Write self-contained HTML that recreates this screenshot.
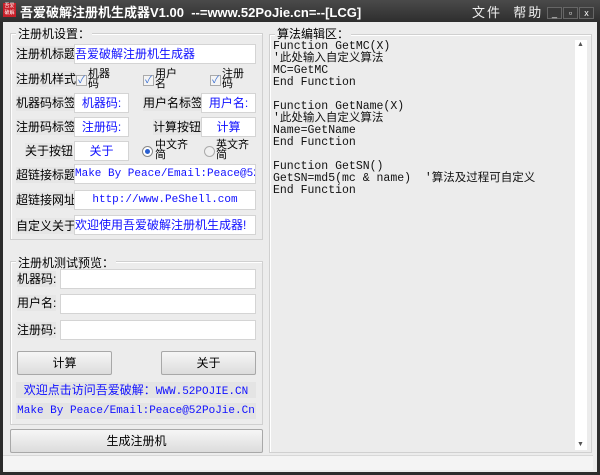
<!DOCTYPE html>
<html><head><meta charset="utf-8"><style>
*{margin:0;padding:0;box-sizing:border-box}
body{width:600px;height:475px;background:#2b2b2b;position:relative;overflow:hidden;font-family:"Liberation Sans","Noto Sans CJK SC",sans-serif;font-size:12px;color:#000}
.a{position:absolute}
#title{left:0;top:0;width:600px;height:22px;background:linear-gradient(#4a4a4a,#2e2e2e)}
#win{left:3px;top:22px;width:594px;height:450px;background:#ececec}
.grp{position:absolute;border:1px solid #d0d0d0;box-shadow:inset 1px 1px 0 #fff}
.gl{position:absolute;background:#ececec;padding:0 2px;font-size:12px}
.in{position:absolute;background:#fff;border:1px solid #d4d4d4;color:#1010ff;font-size:12px;line-height:18px;height:20px;overflow:hidden;white-space:nowrap}
.lb{position:absolute;font-size:12px;line-height:16px;background:#e6e6e6}
.mono{font-family:"Liberation Mono","Noto Sans CJK SC",monospace}
.btn{position:absolute;border:1px solid #a8a8a8;border-radius:2px;background:linear-gradient(#f6f6f6,#dcdcdc);text-align:center;font-size:12px}
.cb{position:absolute;width:11px;height:11px;border:1px solid #aaa;background:#f4f4f4;color:#3a6ed0;font-size:10px;line-height:9px;text-align:center}
.sm{position:absolute;font-size:11px;line-height:10px;width:26px}
.code{position:absolute;left:273px;top:41px;font-family:"Liberation Mono","Noto Sans CJK SC",monospace;font-size:11.5px;line-height:12px;white-space:pre;color:#111}
.wbtn{position:absolute;top:7px;width:15px;height:12px;border:1px solid #666;background:#3a3a3a;color:#fff;font-size:9px;line-height:10px;text-align:center}
</style></head><body>
<div id="title" class="a">
 <div class="a" style="left:3px;top:3px;width:13px;height:14px;background:#c8202a;color:#fff;font-size:5px;line-height:7px;text-align:center">吾爱<br>破解</div>
 <div class="a" style="left:20px;top:2px;color:#fff;font-weight:bold;font-size:13px;white-space:nowrap">吾爱破解注册机生成器V1.00&nbsp; --=www.52PoJie.cn=--[LCG]</div>
 <div class="a" style="left:472px;top:2px;color:#eee;font-size:13px;letter-spacing:2px">文件&nbsp; 帮助</div>
 <div class="wbtn" style="left:547px">_</div><div class="wbtn" style="left:563px">▫</div><div class="wbtn" style="left:579px">x</div>
</div>
<div id="win" class="a"></div>
<!-- left group 1 -->
<div class="grp" style="left:10px;top:33px;width:253px;height:207px"></div>
<div class="gl" style="left:16px;top:25px">注册机设置：</div>
<div class="lb" style="left:16px;top:46px">注册机标题</div><div class="in" style="left:74px;top:44px;width:182px">吾爱破解注册机生成器</div>
<div class="lb" style="left:16px;top:71px">注册机样式</div>
<div class="cb" style="left:76px;top:75px">✓</div><div class="sm" style="left:88px;top:69px">机器<br>码</div>
<div class="cb" style="left:143px;top:75px">✓</div><div class="sm" style="left:155px;top:69px">用户<br>名</div>
<div class="cb" style="left:210px;top:75px">✓</div><div class="sm" style="left:222px;top:69px">注册<br>码</div>
<div class="lb" style="left:16px;top:95px">机器码标签</div><div class="in" style="left:74px;top:93px;width:55px;text-align:center">机器码:</div>
<div class="lb" style="left:143px;top:95px">用户名标签</div><div class="in" style="left:201px;top:93px;width:55px;text-align:center">用户名:</div>
<div class="lb" style="left:16px;top:119px">注册码标签</div><div class="in" style="left:74px;top:117px;width:55px;text-align:center">注册码:</div>
<div class="lb" style="left:153px;top:119px">计算按钮</div><div class="in" style="left:201px;top:117px;width:55px;text-align:center">计算</div>
<div class="lb" style="left:25px;top:143px">关于按钮</div><div class="in" style="left:74px;top:141px;width:55px;text-align:center">关于</div>
<div class="a" style="left:142px;top:146px;width:11px;height:11px;border-radius:50%;border:1px solid #888;background:#fff"><div class="a" style="left:2px;top:2px;width:5px;height:5px;border-radius:50%;background:#2a5fd0"></div></div>
<div class="sm" style="left:155px;top:140px;width:40px">中文齐<br>简</div>
<div class="a" style="left:204px;top:146px;width:11px;height:11px;border-radius:50%;border:1px solid #aaa;background:#f0f0f0"></div>
<div class="sm" style="left:216px;top:140px;width:40px">英文齐<br>简</div>
<div class="lb" style="left:16px;top:167px">超链接标题</div><div class="in mono" style="left:74px;top:164px;width:182px;font-size:11px">Make By Peace/Email:Peace@52PoJie.Cn</div>
<div class="lb" style="left:16px;top:192px">超链接网址</div><div class="in mono" style="left:74px;top:190px;width:182px;text-align:center;font-size:11px">http://www.PeShell.com</div>
<div class="lb" style="left:16px;top:218px">自定义关于</div><div class="in" style="left:74px;top:215px;width:182px">欢迎使用吾爱破解注册机生成器!</div>
<!-- group 2 -->
<div class="grp" style="left:10px;top:261px;width:253px;height:164px"></div>
<div class="gl" style="left:16px;top:254px">注册机测试预览：</div>
<div class="lb" style="left:17px;top:271px">机器码:</div><div class="in" style="left:60px;top:269px;width:196px"></div>
<div class="lb" style="left:17px;top:295px">用户名:</div><div class="in" style="left:60px;top:294px;width:196px"></div>
<div class="lb" style="left:17px;top:322px">注册码:</div><div class="in" style="left:60px;top:320px;width:196px"></div>
<div class="btn" style="left:17px;top:351px;width:95px;height:24px;line-height:22px">计算</div>
<div class="btn" style="left:161px;top:351px;width:95px;height:24px;line-height:22px">关于</div>
<div class="a" style="left:16px;top:382px;width:240px;height:16px;background:#e4e4e4;color:#1010ff;text-align:center;line-height:16px">欢迎点击访问吾爱破解：<span class="mono" style="font-size:11px">WWW.52POJIE.CN</span></div>
<div class="a mono" style="left:16px;top:403px;width:240px;height:16px;background:#e4e4e4;color:#1010ff;text-align:center;line-height:16px;font-size:11px">Make By Peace/Email:Peace@52PoJie.Cn</div>
<div class="btn" style="left:10px;top:429px;width:253px;height:24px;line-height:22px">生成注册机</div>
<!-- right -->
<div class="grp" style="left:269px;top:34px;width:323px;height:419px"></div>
<div class="gl" style="left:275px;top:25px">算法编辑区：</div>
<div class="a" style="left:575px;top:40px;width:12px;height:410px;background:#fff"></div>
<div class="a" style="left:577px;top:41px;font-size:7px;color:#555">▲</div>
<div class="a" style="left:577px;top:441px;font-size:7px;color:#555">▼</div>
<div class="code">Function GetMC(X)
'此处输入自定义算法
MC=GetMC
End Function

Function GetName(X)
'此处输入自定义算法
Name=GetName
End Function

Function GetSN()
GetSN=md5(mc &amp; name)  '算法及过程可自定义
End Function</div>
<div class="a" style="left:3px;top:455px;width:590px;height:15px;background:#f4f4f4;border-top:1px solid #d8d8d8"></div>
</body></html>
